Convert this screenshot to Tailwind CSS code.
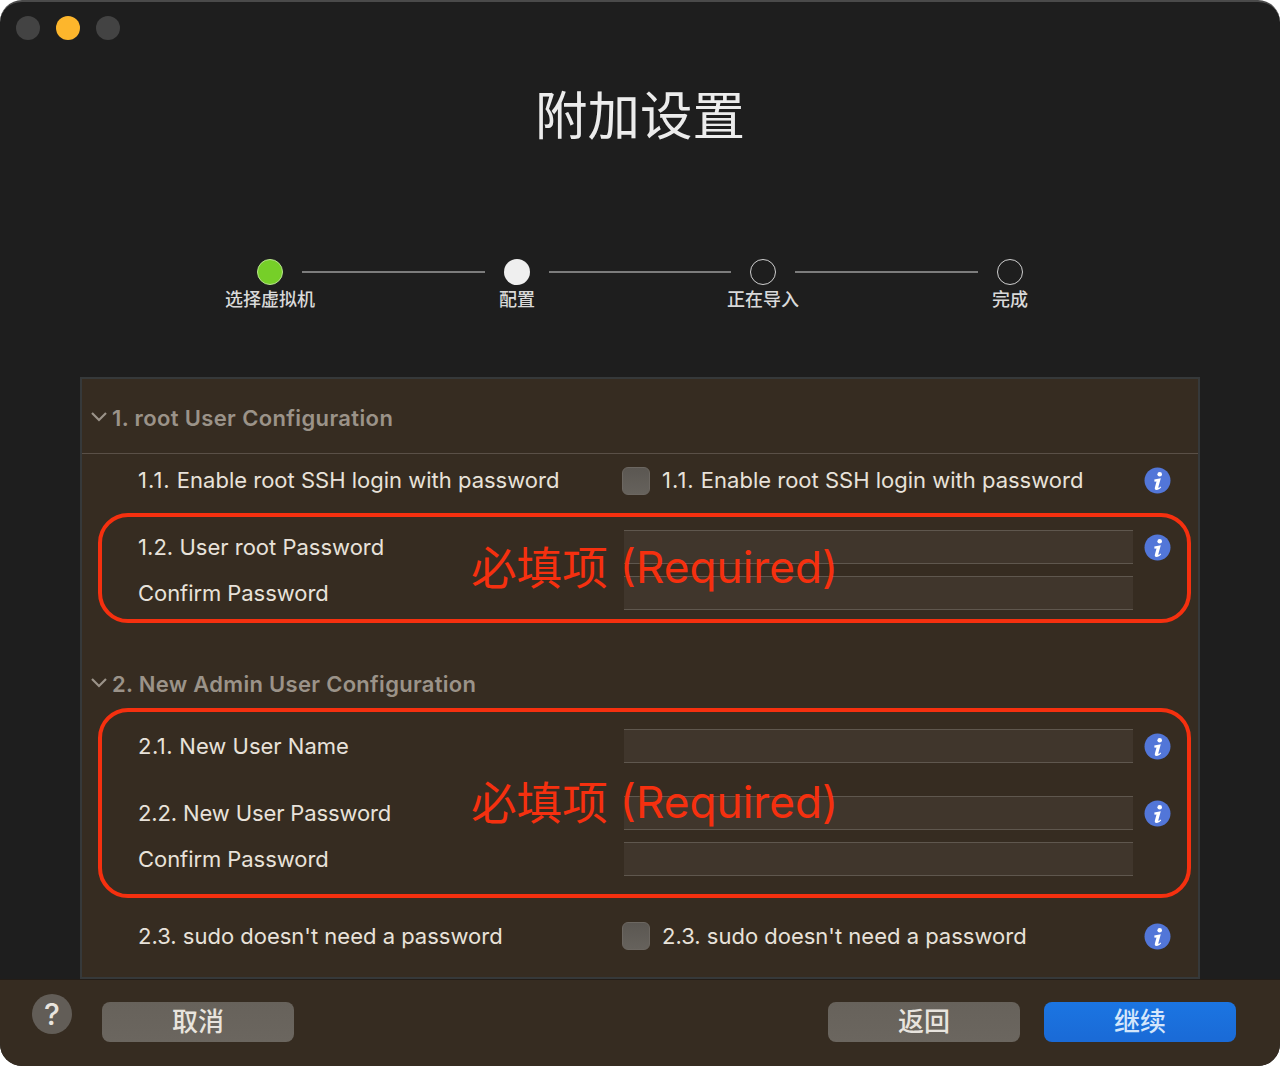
<!DOCTYPE html>
<html lang="en">
<head>
  <meta charset="UTF-8" />
  <title>附加设置</title>
  <script src="https://cdn.jsdelivr.net/npm/@tailwindcss/browser@4"></script>
</head>
<body class="bg-white">
  <div class="relative w-[1280px] h-[1066px] flex flex-col rounded-[22px] overflow-hidden bg-[#1e1e1e] border-t-2 border-[#4a4a4a] font-['Inter','Noto_Sans_CJK_SC',sans-serif]">

    <!-- Traffic lights -->
    <div class="flex gap-4 pl-4 pt-[14px] h-[40px] shrink-0">
      <span class="w-6 h-6 rounded-full bg-[#434343]"></span>
      <span class="w-6 h-6 rounded-full bg-[#fdb62c]"></span>
      <span class="w-6 h-6 rounded-full bg-[#434343]"></span>
    </div>

    <h1 class="h-[70px] mt-[35px] text-center text-[52.500px] leading-[70px] font-normal text-[#ececec] font-['Noto_Sans_CJK_SC',sans-serif]">附加设置</h1>

    <!-- Stepper -->
    <div class="mt-[112px] h-[60px] pl-[224px] flex items-start text-[#d9d9d9] text-[18px] leading-[24px] font-medium font-['Noto_Sans_CJK_SC',sans-serif]">
      <div class="w-[92px] flex flex-col items-center gap-[1px] whitespace-nowrap">
        <span class="w-[26px] h-[26px] rounded-full bg-[#76cf28] border border-[#b9e58e]"></span>
        <span>选择虚拟机</span>
      </div>
      <span class="w-[183px] h-[2px] mt-3 mx-[-14px] bg-[#7c7c7c]"></span>
      <div class="w-[92px] flex flex-col items-center gap-[1px]">
        <span class="w-[26px] h-[26px] rounded-full bg-[#efefef]"></span>
        <span>配置</span>
      </div>
      <span class="w-[182px] h-[2px] mt-3 mx-[-14px] bg-[#7c7c7c]"></span>
      <div class="w-[92px] flex flex-col items-center gap-[1px]">
        <span class="w-[26px] h-[26px] rounded-full border border-[#cfcfcf]"></span>
        <span>正在导入</span>
      </div>
      <span class="w-[183px] h-[2px] mt-3 mx-[-14px] bg-[#7c7c7c]"></span>
      <div class="w-[92px] flex flex-col items-center gap-[1px]">
        <span class="w-[26px] h-[26px] rounded-full border border-[#cfcfcf]"></span>
        <span>完成</span>
      </div>
    </div>

    <!-- Settings panel -->
    <div class="mt-[58px] mx-[80px] w-[1120px] h-[602px] shrink-0 bg-[#362c21] border-2 border-[#36393a] text-[22px] text-[#e8e2da]">
      <div class="h-[75px] pt-[5px] flex items-center gap-[4px] pl-[8px] border-b border-[#5a5047] text-[#9b9389] font-semibold tracking-[0.37px]">
        <svg class="w-[18px] h-[12px] -mt-[4px]" viewBox="0 0 18 12" fill="none" stroke="#9b9389" stroke-width="2.2"><path d="M2 2l7 7 7-7"/></svg>
        <span>1. root User Configuration</span>
      </div>

      <div class="h-[53px] flex items-center">
        <span class="w-[540px] pl-[56px] shrink-0"><span class="tracking-[1px]">1.1.</span> Enable root SSH login with password</span>
        <span class="w-[28px] h-[28px] rounded-md bg-linear-to-b from-[#5b5752] to-[#66625c] border border-[#6c6761]"></span>
        <span class="ml-[12px]"><span class="tracking-[1px]">1.1.</span> Enable root SSH login with password</span>
        <svg class="absolute left-[1144px] w-[27px] h-[27px]" viewBox="0 0 27 27"><circle cx="13.5" cy="13.5" r="13" fill="#5276d8"/><circle cx="15.700" cy="7.300" r="2.300" fill="#fff"/><path d="M10.300 12.500l6.500-1.300-2.500 9c-.2.800.6.800 1.100.4l1.200-1 .6.700c-1.500 1.800-3 2.600-4.700 2.600-1.500 0-2-1-1.600-2.400l1.600-6-2 .3z" fill="#fff"/></svg>
      </div>

      <div class="mt-[23px] h-[34px] flex items-center">
        <span class="w-[542px] pl-[56px] shrink-0"><span class="tracking-[0.05px]">1.2.</span> User root Password</span>
        <span class="w-[509px] h-[34px] bg-[#40362c] border-y border-[#5f574e]"></span>
        <svg class="absolute left-[1144px] w-[27px] h-[27px]" viewBox="0 0 27 27"><circle cx="13.5" cy="13.5" r="13" fill="#5276d8"/><circle cx="15.700" cy="7.300" r="2.300" fill="#fff"/><path d="M10.300 12.500l6.500-1.300-2.500 9c-.2.800.6.800 1.100.4l1.200-1 .6.700c-1.500 1.800-3 2.600-4.700 2.600-1.500 0-2-1-1.600-2.400l1.600-6-2 .3z" fill="#fff"/></svg>
      </div>
      <div class="mt-[12px] h-[34px] flex items-center">
        <span class="w-[542px] pl-[56px] shrink-0 tracking-[-0.06px]">Confirm Password</span>
        <span class="w-[509px] h-[34px] bg-[#40362c] border-y border-[#5f574e]"></span>
      </div>

      <div class="mt-[57px] h-[34px] flex items-center gap-[4px] pl-[8px] text-[#9b9389] font-semibold tracking-[0.3px]">
        <svg class="w-[18px] h-[12px] -mt-[2px]" viewBox="0 0 18 12" fill="none" stroke="#9b9389" stroke-width="2.2"><path d="M2 2l7 7 7-7"/></svg>
        <span>2. New Admin User Configuration</span>
      </div>

      <div class="mt-[28px] h-[34px] flex items-center">
        <span class="w-[542px] pl-[56px] shrink-0"><span class="tracking-[0.5px]">2.1.</span> New User Name</span>
        <span class="w-[509px] h-[34px] bg-[#40362c] border-y border-[#5f574e]"></span>
        <svg class="absolute left-[1144px] w-[27px] h-[27px]" viewBox="0 0 27 27"><circle cx="13.5" cy="13.5" r="13" fill="#5276d8"/><circle cx="15.700" cy="7.300" r="2.300" fill="#fff"/><path d="M10.300 12.500l6.500-1.300-2.500 9c-.2.800.6.800 1.100.4l1.200-1 .6.700c-1.500 1.800-3 2.600-4.700 2.600-1.500 0-2-1-1.600-2.400l1.600-6-2 .3z" fill="#fff"/></svg>
      </div>
      <div class="mt-[33px] h-[34px] flex items-center">
        <span class="w-[542px] pl-[56px] shrink-0 tracking-[-0.13px]">2.2. New User Password</span>
        <span class="w-[509px] h-[34px] bg-[#40362c] border-y border-[#5f574e]"></span>
        <svg class="absolute left-[1144px] w-[27px] h-[27px]" viewBox="0 0 27 27"><circle cx="13.5" cy="13.5" r="13" fill="#5276d8"/><circle cx="15.700" cy="7.300" r="2.300" fill="#fff"/><path d="M10.300 12.500l6.500-1.300-2.500 9c-.2.800.6.800 1.100.4l1.200-1 .6.700c-1.500 1.800-3 2.600-4.700 2.600-1.500 0-2-1-1.600-2.400l1.600-6-2 .3z" fill="#fff"/></svg>
      </div>
      <div class="mt-[12px] h-[34px] flex items-center">
        <span class="w-[542px] pl-[56px] shrink-0 tracking-[-0.06px]">Confirm Password</span>
        <span class="w-[509px] h-[34px] bg-[#40362c] border-y border-[#5f574e]"></span>
      </div>

      <div class="mt-[43px] h-[34px] flex items-center">
        <span class="w-[540px] pl-[56px] shrink-0">2.3. sudo doesn't need a password</span>
        <span class="w-[28px] h-[28px] rounded-md bg-linear-to-b from-[#5b5752] to-[#66625c] border border-[#6c6761]"></span>
        <span class="ml-[12px]">2.3. sudo doesn't need a password</span>
        <svg class="absolute left-[1144px] w-[27px] h-[27px]" viewBox="0 0 27 27"><circle cx="13.5" cy="13.5" r="13" fill="#5276d8"/><circle cx="15.700" cy="7.300" r="2.300" fill="#fff"/><path d="M10.300 12.500l6.500-1.300-2.500 9c-.2.800.6.800 1.100.4l1.200-1 .6.700c-1.500 1.800-3 2.600-4.700 2.600-1.500 0-2-1-1.600-2.400l1.600-6-2 .3z" fill="#fff"/></svg>
      </div>
    </div>

    <!-- Footer -->
    <div class="flex-1 flex items-center bg-[#362c21] border-t border-[#241d17] pl-[32px] pr-[44px] text-[26px] font-medium text-[#e8e4de] font-['Noto_Sans_CJK_SC',sans-serif]">
      <span class="w-10 h-10 -mt-[18px] rounded-full bg-[#625d57] flex items-center justify-center text-[30px] font-['Inter',sans-serif]">?</span>
      <button class="ml-[30px] w-[192px] h-10 -mt-[2px] pb-[5px] rounded-lg bg-linear-to-b from-[#67625b] to-[#6b665f] leading-[35px]">取消</button>
      <button class="ml-auto w-[192px] h-10 -mt-[2px] pb-[5px] rounded-lg bg-linear-to-b from-[#67625b] to-[#6b665f] leading-[35px]">返回</button>
      <button class="ml-6 w-[192px] h-10 -mt-[2px] pb-[5px] rounded-lg bg-linear-to-b from-[#1b75e2] to-[#1a6ad6] text-[#d4e6fb] leading-[35px]">继续</button>
    </div>

    <!-- Red annotations -->
    <div class="absolute left-[98px] top-[511px] w-[1093px] h-[110px] rounded-[30px] border-4 border-[#f5300f]"></div>
    <div class="absolute left-[98px] top-[706px] w-[1093px] h-[190px] rounded-[30px] border-4 border-[#f5300f]"></div>
    <div class="absolute left-[471px] top-[533px] flex items-center gap-[12px] h-[64px] text-[#f5300f] whitespace-nowrap">
      <span class="text-[45.600px] -mt-[4px] font-['Noto_Sans_CJK_SC',sans-serif]">必填项</span>
      <span class="text-[44.200px]">(Required)</span>
    </div>
    <div class="absolute left-[471px] top-[768px] flex items-center gap-[12px] h-[64px] text-[#f5300f] whitespace-nowrap">
      <span class="text-[45.600px] -mt-[4px] font-['Noto_Sans_CJK_SC',sans-serif]">必填项</span>
      <span class="text-[44.200px]">(Required)</span>
    </div>
  </div>
</body>
</html>
